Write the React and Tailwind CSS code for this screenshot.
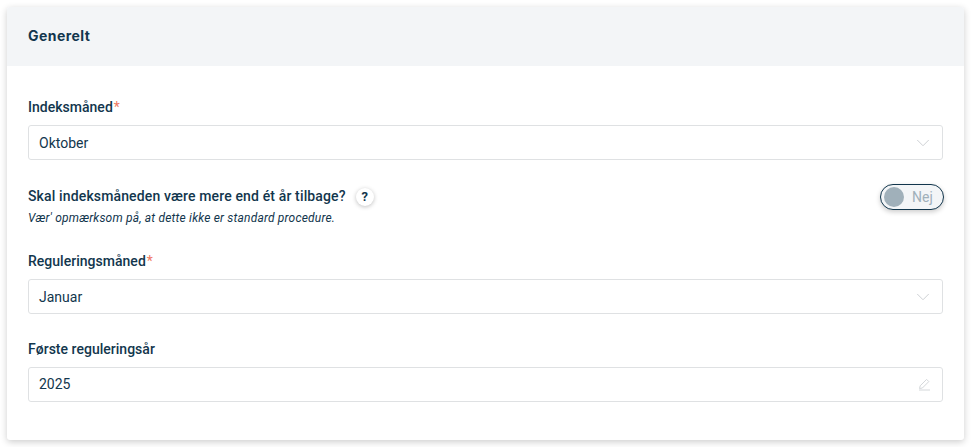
import React from "react";
import { ChevronDown } from "lucide-react";

function Pencil() {
  return (
    <svg width="13" height="13" viewBox="0 0 13 13" fill="none" stroke="#d4d7da" strokeWidth="1" className="shrink-0 -mr-px -mt-px">
      <path d="M1.5 10.5 L2.2 7.8 L8.6 1.4 L10.8 3.6 L4.4 10 L1.5 10.5 Z" />
      <path d="M1 12 H12" />
    </svg>
  );
}

function Field({ label, required, value, icon, flush }) {
  return (
    <div>
      <div className="h-[21px] flex items-center text-[14px] font-medium tracking-[0.02px] text-[#12364d] leading-none">
        {label}
        {required && <span className="text-[#ef7a63] ml-px font-normal">*</span>}
      </div>
      <div className="mt-[8px] h-[35px] border border-[#dfe1e3] rounded-[3px] bg-white flex items-center justify-between pl-[10px] pr-[12px]">
        <span className={flush ? "text-[14px] text-[#12364d]" : "pt-px text-[14px] text-[#12364d]"}>{value}</span>
        {icon}
      </div>
    </div>
  );
}

export default function App() {
  const chevron = <ChevronDown size={22} strokeWidth={1} color="#c9cdd0" className="shrink-0 -mr-[4px]" />;
  return (
    <div className="w-[971px] h-[447px] bg-white p-[7px] overflow-hidden" style={{ fontFamily: "Roboto, sans-serif" }}>
      <div className="h-[433px] rounded-[3px] bg-white shadow-[0_2px_7px_rgba(0,0,0,0.2)] overflow-hidden">
        <div className="h-[59px] bg-[#f3f5f7] flex items-center px-[21px] pb-[2px]">
          <span className="text-[14px] font-bold tracking-[0.45px] text-[#12364d]" style={{ fontFamily: "Inter, sans-serif" }}>Generelt</span>
        </div>
        <div className="pt-[30px] pl-[21px] pr-[21px] flex flex-col">
          <Field label="Indeksmåned" required value="Oktober" icon={chevron} />
          <div className="mt-[24px] h-[43px] flex justify-between">
            <div className="pt-[2px]">
              <div className="flex items-center h-[21px]">
                <span className="text-[14px] font-medium tracking-[0.14px] text-[#12364d]">Skal indeksmåneden være mere end ét år tilbage?</span>
                <span className="ml-[10px] w-[18px] h-[18px] rounded-full bg-white shadow-[0_1px_4px_rgba(0,0,0,0.25)] flex items-center justify-center text-[13px] font-bold text-[#12364d]">?</span>
              </div>
              <div className="mt-[3px] text-[12px] italic tracking-[0.19px] text-[#12364d] leading-[16px]">Vær' opmærksom på, at dette ikke er standard procedure.</div>
            </div>
            <div className="-mr-px w-[64px] h-[26px] rounded-full border border-[#12364d] bg-[#f3f5f7] shadow-[0_2px_5px_rgba(0,0,0,0.2)] flex items-center pl-[3px]">
              <span className="w-[20px] h-[20px] rounded-full bg-[#a0b0ba]" />
              <span className="ml-[8px] text-[14px] text-[#a0b0ba] tracking-[0.1px]">Nej</span>
            </div>
          </div>
          <div className="mt-[23px]">
            <Field label="Reguleringsmåned" required value="Januar" icon={chevron} />
          </div>
          <div className="mt-[24px]">
            <Field label="Første reguleringsår" value="2025" icon={<Pencil />} flush />
          </div>
        </div>
      </div>
    </div>
  );
}
